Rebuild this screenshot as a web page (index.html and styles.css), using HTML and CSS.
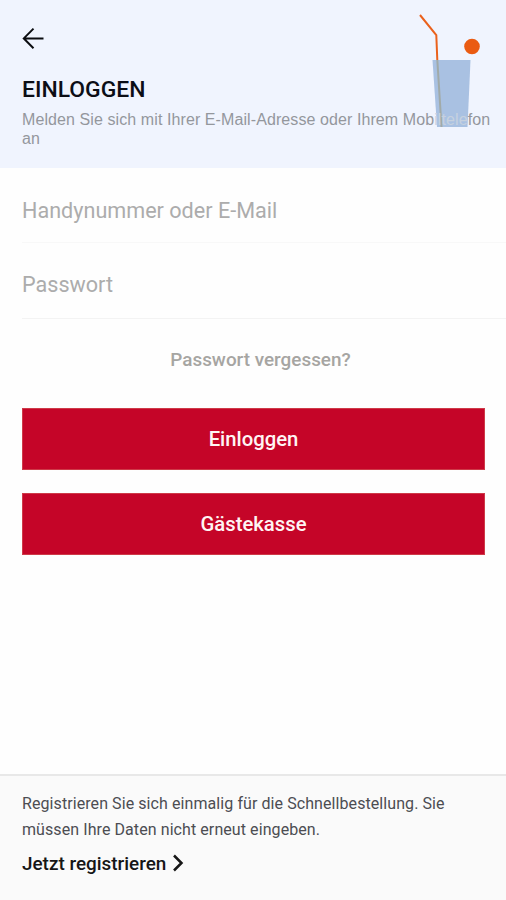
FILE: index.html
```html
<!DOCTYPE html>
<html lang="de">
<head>
<meta charset="utf-8">
<title>Einloggen</title>
<link rel="stylesheet" href="styles.css">
</head>
<body>
<div class="screen">
  <header class="header">
    <svg class="back" width="22" height="22" viewBox="0 0 22 22" aria-hidden="true"><path d="M21.5 11.4H1.8M11.5 1.6L1.8 11.4L11.5 21.2"/></svg>
    <h1 class="title">EINLOGGEN</h1>
    <svg class="drink" width="66" height="116" viewBox="0 0 66 116" aria-hidden="true">
      <path class="glass" d="M17.5 46H55.5L52.5 113H22Z"/>
      <path class="straw" d="M5 1L21.3 21L22.3 46"/>
      <path class="straw-in" d="M22.3 46L26.5 113"/>
      <circle class="orange" cx="57" cy="32.5" r="7.8"/>
    </svg>
    <p class="subtitle">Melden Sie sich mit Ihrer E-Mail-Adresse oder Ihrem Mob<span class="over-glass">iltele</span>fon an</p>
  </header>
  <main class="form">
    <div class="field field-login">Handynummer oder E-Mail</div>
    <div class="field field-password">Passwort</div>
    <a class="forgot">Passwort vergessen?</a>
    <div class="button">Einloggen</div>
    <div class="button">Gästekasse</div>
  </main>
  <footer class="footer">
    <p class="hint">Registrieren Sie sich einmalig für die Schnellbestellung. Sie<br>müssen Ihre Daten nicht erneut eingeben.</p>
    <a class="register"><span>Jetzt registrieren</span><svg width="12" height="18" viewBox="0 0 12 18" aria-hidden="true"><path d="M2 1.5L9.5 9L2 16.5"/></svg></a>
  </footer>
</div>
</body>
</html>
```

FILE: styles.css
```css
* { box-sizing: border-box; }
body { margin: 0; background: #fefefe; font-family: Roboto, sans-serif; }
h1, p { margin: 0; }
svg { display: block; fill: none; flex: none; }
.screen { height: 900px; display: flex; flex-direction: column; overflow: hidden; }

.header { position: relative; height: 168px; padding: 27px 12px 0 22px; background: #f0f4fe; }
.back { stroke: #0b0c10; stroke-width: 2; }
.title { margin-top: 27px; font-size: 22.9px; line-height: 28px; font-weight: 500; color: #0c0e16; white-space: nowrap; }
.subtitle { position: relative; margin-top: 6px; font: 16px/19px "Liberation Sans", Arial, sans-serif; letter-spacing: .09px; color: #94979d; }
.over-glass { color: #c6d1df; }
.drink { position: absolute; left: 415px; top: 14px; }
.glass { fill: #a9c1e2; }
.straw { stroke: #ea611c; stroke-width: 2; }
.straw-in { stroke: #a1aaa8; stroke-width: 2; }
.orange { fill: #ea5b12; }

.form { flex: 1; padding: 0 21px 0 22px; }
.field { margin-right: -21px; font-size: 21.6px; color: #acacac; line-height: 28px; border-bottom: 1px solid #f8f8f8; }
.field-login { height: 75px; padding-top: 29px; }
.field-password { height: 76px; padding-top: 28px; border-color: #f3f3f3; }
.forgot { display: block; margin: 28px 0 36px 14px; text-align: center; font-size: 18.9px; line-height: 25px; font-weight: 500; color: #a6a5a2; }
.button { height: 62px; margin-bottom: 23px; display: flex; align-items: center; justify-content: center; background: #c50528; border: 1px solid #ce3a48; color: #fff5f4; font-size: 20.3px; font-weight: 500; }

.footer { height: 126px; padding: 15px 22px 0; border-top: 2px solid #e8e8e8; background: #fafafa; }
.hint { font-size: 16px; line-height: 25.5px; letter-spacing: .08px; color: #4c4d52; white-space: nowrap; }
.register { display: flex; align-items: center; gap: 6px; margin-top: 8px; height: 26px; font-size: 18.9px; font-weight: 500; color: #161616; }
.register path { stroke: #161616; stroke-width: 2.5; }
```
